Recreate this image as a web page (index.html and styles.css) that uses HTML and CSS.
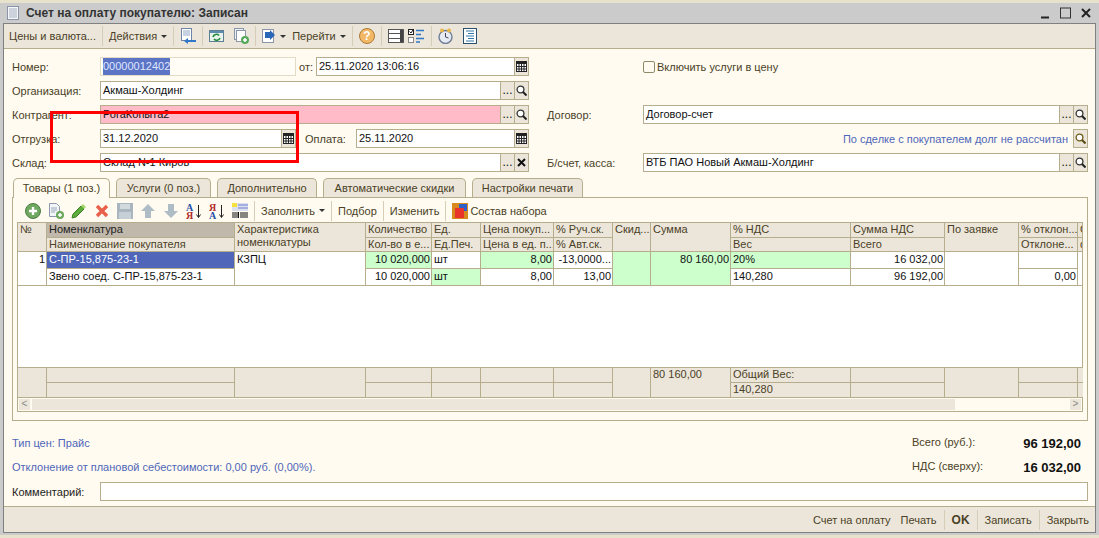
FILE: index.html
```html
<!DOCTYPE html>
<html lang="ru">

<head>
  <meta charset="UTF-8">
  <title>Счет на оплату покупателю: Записан</title>
  <link rel="stylesheet" href="styles.css">
</head>

<body>
  <svg class="sprite" width="0" height="0">
    <symbol id="i-cal" viewBox="0 0 11 11">
      <rect x="0.5" y="0.5" width="10" height="10" fill="#fff" stroke="#222" />
      <rect x="0" y="0" width="11" height="3" fill="#222" />
      <path d="M0 5.5h11M0 8h11M3 3v8M5.5 3v8M8 3v8" stroke="#222" />
    </symbol>
    <symbol id="i-find" viewBox="0 0 11 11">
      <circle cx="4.5" cy="4.5" r="3.4" fill="#fff" stroke="#333" stroke-width="1.3" />
      <path d="M7 7l3.5 3.5" stroke="#222" stroke-width="2" />
    </symbol>
    <symbol id="i-find-brown" viewBox="0 0 11 11">
      <circle cx="4.5" cy="4.5" r="3.4" fill="#fff" stroke="#6b5a14" stroke-width="1.3" />
      <path d="M7 7l3.5 3.5" stroke="#5b4a10" stroke-width="2" />
    </symbol>
  </svg>

  <div class="window">
    <div class="title">
      <svg class="title-icon" width="12" height="14" viewBox="0 0 12 14">
        <rect x="0.5" y="0.5" width="11" height="13" fill="#f6f7fa" stroke="#8a94a6" />
        <path d="M2 3h8M2 5h8M2 7h8M2 9h8M2 11h8" stroke="#a3adbd" />
      </svg>
      <span class="title-text">Счет на оплату покупателю: Записан</span>
      <div class="win-buttons">
        <svg width="9" height="12" viewBox="0 0 9 12"><path d="M0 10.5h8" stroke="#222" stroke-width="2" /></svg>
        <svg width="11" height="12" viewBox="0 0 11 12"><rect x="0.5" y="1" width="10" height="10" fill="none" stroke="#333" /></svg>
        <svg width="10" height="12" viewBox="0 0 10 12"><path d="M1 2l8 8M9 2l-8 8" stroke="#222" stroke-width="2" /></svg>
      </div>
    </div>

    <div class="inner">
      <div class="toolbar">
        <span>Цены и валюта...</span>
        <i class="sep"></i>
        <div class="group"><span>Действия</span><i class="arrow"></i></div>
        <i class="sep"></i>
        <svg width="16" height="16" viewBox="0 0 16 16">
          <rect x="1.5" y="0.5" width="10" height="12" fill="#fff" stroke="#6d83a8" />
          <path d="M3 3h7M3 5h7M3 7h7" stroke="#8ea3c4" />
          <path d="M16 12H8V10l-4 3 4 3v-2h8z" fill="#2f78c8" />
        </svg>
        <i class="sep"></i>
        <div class="group wide">
          <svg width="15" height="16" viewBox="0 0 15 16">
            <rect x="0.5" y="2.5" width="14" height="11" fill="#e8f3ec" stroke="#5c7f92" />
            <rect x="1" y="3" width="13" height="2" fill="#5c8db0" />
            <path d="M4 9a3.500 3.500 0 0 1 6-1.500M11 10a3.500 3.500 0 0 1-6 1" fill="none" stroke="#1f8a3a" stroke-width="1.600" />
          </svg>
          <svg width="15" height="16" viewBox="0 0 15 16">
            <rect x="0.5" y="0.5" width="9" height="11" fill="#eef1f5" stroke="#8996a8" />
            <rect x="2.500" y="2.500" width="9" height="11" fill="#fff" stroke="#8996a8" />
            <circle cx="11" cy="12" r="4" fill="#58a85c" />
            <path d="M9 12h4M11 10v4" stroke="#fff" stroke-width="1.500" />
          </svg>
        </div>
        <i class="sep"></i>
        <div class="group">
          <svg width="14" height="16" viewBox="0 0 14 16">
            <rect x="0.5" y="1.500" width="11" height="13" fill="#fff" stroke="#8996a8" />
            <path d="M3 4l5 0 0-2 5 5-5 5 0-2-5 0z" fill="#2a66b8" />
          </svg>
          <i class="arrow"></i>
        </div>
        <div class="group"><span>Перейти</span><i class="arrow"></i></div>
        <i class="sep"></i>
        <svg width="16" height="16" viewBox="0 0 16 16">
          <circle cx="8" cy="8" r="7.500" fill="#f3b866" stroke="#a87a3a" />
          <text x="8" y="12" class="help-mark">?</text>
        </svg>
        <i class="sep"></i>
        <div class="group">
          <svg width="16" height="16" viewBox="0 0 16 16">
            <rect x="0.500" y="1.500" width="15" height="13" fill="#fff" stroke="#555" />
            <path d="M0 5.500h16M0 10.500h16" stroke="#555" />
            <rect x="12" y="2" width="3" height="12" fill="#444" />
          </svg>
          <svg width="17" height="16" viewBox="0 0 17 16">
            <rect x="0.500" y="1.500" width="5" height="5" fill="#fff" stroke="#222" />
            <rect x="0.500" y="9.500" width="5" height="5" fill="#fff" stroke="#888" />
            <path d="M1.500 3.500l1.500 1.500 2-3" fill="none" stroke="#111" />
            <path d="M8 2.500h8M8 6.500h5M8 10.500h8M8 14h4" stroke="#2f78c8" stroke-width="1.600" />
          </svg>
        </div>
        <i class="sep"></i>
        <div class="group wide">
          <svg width="15" height="16" viewBox="0 0 15 16">
            <circle cx="7.500" cy="9" r="6.500" fill="#e6eaf2" stroke="#6f7f98" stroke-width="1.400" />
            <path d="M7.500 5v4l3 1" fill="none" stroke="#445" />
            <circle cx="4" cy="2.500" r="2" fill="#e8b54a" />
            <circle cx="11" cy="2.500" r="2" fill="#e8b54a" />
          </svg>
          <svg width="14" height="16" viewBox="0 0 14 16">
            <rect x="0.500" y="0.500" width="13" height="15" fill="#fff" stroke="#2b4f6e" />
            <path d="M3 3h8M5 5.500h6M3 8h8M5 10.500h6M3 13h8" stroke="#2f78a8" />
          </svg>
        </div>
      </div>

      <div class="form">
        <div class="head">
          <div class="col">
            <div class="row">
              <label class="cap">Номер:</label>
              <div class="field w-num readonly"><span class="picked">00000012402</span></div>
              <label class="cap-short">от:</label>
              <div class="field grow">
                <span class="val">25.11.2020 13:06:16</span>
                <span class="btn"><svg width="11" height="11"><use href="#i-cal" /></svg></span>
              </div>
            </div>
            <div class="row">
              <label class="cap">Организация:</label>
              <div class="field grow">
                <span class="val">Акмаш-Холдинг</span>
                <span class="btn dots">...</span>
                <span class="btn"><svg width="11" height="11"><use href="#i-find" /></svg></span>
              </div>
            </div>
            <div class="row">
              <label class="cap">Контрагент:</label>
              <div class="field grow pink">
                <span class="val">РогаКопыта2</span>
                <span class="btn dots">...</span>
                <span class="btn"><svg width="11" height="11"><use href="#i-find" /></svg></span>
              </div>
            </div>
            <div class="row">
              <label class="cap">Отгрузка:</label>
              <div class="field w-num">
                <span class="val">31.12.2020</span>
                <span class="btn"><svg width="11" height="11"><use href="#i-cal" /></svg></span>
              </div>
              <label class="cap-pay">Оплата:</label>
              <div class="field grow">
                <span class="val">25.11.2020</span>
                <span class="btn"><svg width="11" height="11"><use href="#i-cal" /></svg></span>
              </div>
            </div>
            <div class="row">
              <label class="cap">Склад:</label>
              <div class="field grow">
                <span class="val">Склад N-1 Киров</span>
                <span class="btn dots">...</span>
                <span class="btn"><svg width="9" height="9" viewBox="0 0 9 9"><path d="M1 1l7 7M8 1l-7 7" stroke="#111" stroke-width="2" /></svg></span>
              </div>
            </div>
          </div>

          <div class="col">
            <div class="row">
              <span class="check-space"></span>
              <span class="check"></span>
              <label class="check-label">Включить услуги в цену</label>
            </div>
            <div class="row"></div>
            <div class="row">
              <label class="cap-right">Договор:</label>
              <div class="field grow">
                <span class="val">Договор-счет</span>
                <span class="btn dots">...</span>
                <span class="btn"><svg width="11" height="11"><use href="#i-find" /></svg></span>
              </div>
            </div>
            <div class="row row-end">
              <a class="link">По сделке с покупателем долг не рассчитан</a>
              <span class="btn-solo"><svg width="11" height="11"><use href="#i-find-brown" /></svg></span>
            </div>
            <div class="row">
              <label class="cap-right">Б/счет, касса:</label>
              <div class="field grow">
                <span class="val">ВТБ ПАО Новый Акмаш-Холдинг</span>
                <span class="btn dots">...</span>
                <span class="btn"><svg width="11" height="11"><use href="#i-find" /></svg></span>
              </div>
            </div>
          </div>
        </div>

        <div class="tabs">
          <div class="tab active">Товары (1 поз.)</div>
          <div class="tab t-2">Услуги (0 поз.)</div>
          <div class="tab t-3">Дополнительно</div>
          <div class="tab t-4">Автоматические скидки</div>
          <div class="tab t-5">Настройки печати</div>
        </div>

        <div class="panel">
          <div class="tools">
            <div class="icons">
              <svg width="16" height="16" viewBox="0 0 16 16">
                <circle cx="8" cy="8" r="7.500" fill="#6fa860" stroke="#4b7d42" />
                <path d="M4 8h8M8 4v8" stroke="#fff" stroke-width="2.400" />
              </svg>
              <svg width="16" height="16" viewBox="0 0 16 16">
                <path d="M1.500 0.500h7l3 3v10h-10z" fill="#f3f5f8" stroke="#8a99ad" />
                <path d="M3 5h6M3 7h6M3 9h4" stroke="#9aa8bb" />
                <circle cx="12" cy="12" r="4" fill="#6aa85c" />
                <path d="M10 12h4M12 10v4" stroke="#fff" stroke-width="1.500" />
              </svg>
              <svg width="16" height="16" viewBox="0 0 16 16">
                <path d="M2 11l8-8 3 3-8 8-4 1z" fill="#5cac3c" stroke="#3c7f28" />
                <path d="M10 3l2-2 3 3-2 2z" fill="#a6d86a" />
              </svg>
              <svg width="16" height="16" viewBox="0 0 16 16">
                <path d="M3 3l10 10M13 3L3 13" stroke="#e8604c" stroke-width="3.400" />
              </svg>
              <svg width="16" height="16" viewBox="0 0 16 16">
                <rect x="0" y="0" width="16" height="16" fill="#a9b6bf" />
                <rect x="3" y="1" width="10" height="5" fill="#d3dade" />
                <rect x="2" y="9" width="12" height="7" fill="#c5cfd5" />
              </svg>
              <svg width="16" height="16" viewBox="0 0 16 16">
                <path d="M8 1l7 7h-4v7H5V8H1z" fill="#aebcc6" />
              </svg>
              <svg width="16" height="16" viewBox="0 0 16 16">
                <path d="M8 15l7-7h-4V1H5v7H1z" fill="#aebcc6" />
              </svg>
              <svg width="16" height="16" viewBox="0 0 16 16">
                <text x="0" y="7.500" class="sort blue">А</text>
                <text x="0" y="15.500" class="sort red">Я</text>
                <path d="M12.500 2v12M10.500 11.500l2 3 2-3" fill="none" stroke="#222" />
              </svg>
              <svg width="16" height="16" viewBox="0 0 16 16">
                <text x="0" y="7.500" class="sort red">Я</text>
                <text x="0" y="15.500" class="sort blue">А</text>
                <path d="M12.500 2v12M10.500 11.500l2 3 2-3" fill="none" stroke="#222" />
              </svg>
              <svg width="16" height="16" viewBox="0 0 16 16">
                <rect x="0" y="0" width="16" height="8" fill="#dbe0ef" />
                <rect x="0" y="0" width="5" height="4" fill="#f5e33c" />
                <path d="M6 2h10M6 5h10" stroke="#6d7fd0" />
                <path d="M1 9v6M3 9v6M5 9v6M6.500 9v6M9 9v6M11 9v6M13 9v6M15 9v6" stroke="#111" />
              </svg>
            </div>
            <i class="sep"></i>
            <div class="group"><span>Заполнить</span><i class="arrow"></i></div>
            <i class="sep"></i>
            <span>Подбор</span>
            <i class="sep"></i>
            <span>Изменить</span>
            <i class="sep"></i>
            <div class="group tight">
              <svg width="16" height="16" viewBox="0 0 16 16">
                <rect x="0" y="0" width="16" height="16" fill="#d98a1e" />
                <rect x="7" y="1" width="8" height="7" fill="#2f62c8" />
                <rect x="3" y="5" width="9" height="10" fill="#e8342a" />
              </svg>
              <span>Состав набора</span>
            </div>
          </div>

          <div class="grid">
            <table class="lines">
              <colgroup>
                <col class="c-num">
                <col class="c-name">
                <col class="c-char">
                <col class="c-qty">
                <col class="c-unit">
                <col class="c-price">
                <col class="c-disc">
                <col class="c-sk">
                <col class="c-sum">
                <col class="c-vat">
                <col class="c-vsum">
                <col class="c-req">
                <col class="c-dev">
                <col class="c-end">
              </colgroup>
              <tr class="r-15">
                <th rowspan="2">№</th>
                <th class="dark">Номенклатура</th>
                <th rowspan="2" class="wrap">Характеристика номенклатуры</th>
                <th>Количество</th>
                <th>Ед.</th>
                <th>Цена покуп...</th>
                <th>% Руч.ск.</th>
                <th rowspan="2">Скид...</th>
                <th rowspan="2">Сумма</th>
                <th>% НДС</th>
                <th>Сумма НДС</th>
                <th rowspan="2">По заявке</th>
                <th>% отклон...</th>
                <th>С</th>
              </tr>
              <tr class="r-14">
                <th>Наименование покупателя</th>
                <th>Кол-во в е...</th>
                <th>Ед.Печ.</th>
                <th>Цена в ед. п...</th>
                <th>% Авт.ск.</th>
                <th>Вес</th>
                <th>Всего</th>
                <th>Отклоне...</th>
                <th>ф</th>
              </tr>
              <tr class="r-17">
                <td rowspan="2" class="num">1</td>
                <td class="selected">С-ПР-15,875-23-1</td>
                <td rowspan="2">КЗПЦ</td>
                <td class="num green">10 020,000</td>
                <td>шт</td>
                <td class="num green">8,00</td>
                <td class="num">-13,0000...</td>
                <td rowspan="2" class="green"></td>
                <td rowspan="2" class="num green">80 160,00</td>
                <td class="green">20%</td>
                <td class="num">16 032,00</td>
                <td rowspan="2"></td>
                <td></td>
                <td rowspan="2" class="no-right"></td>
              </tr>
              <tr class="r-17">
                <td>Звено соед. С-ПР-15,875-23-1</td>
                <td class="num">10 020,000</td>
                <td class="green">шт</td>
                <td class="num">8,00</td>
                <td class="num">13,00</td>
                <td>140,280</td>
                <td class="num">96 192,00</td>
                <td class="num">0,00</td>
              </tr>
              <tr class="r-82">
                <td colspan="14" class="no-right"></td>
              </tr>
              <tr class="r-15 foot">
                <td rowspan="2"></td>
                <td></td>
                <td rowspan="2"></td>
                <td></td>
                <td></td>
                <td></td>
                <td></td>
                <td rowspan="2"></td>
                <td rowspan="2">80 160,00</td>
                <td>Общий Вес:</td>
                <td></td>
                <td rowspan="2"></td>
                <td></td>
                <td class="no-right"></td>
              </tr>
              <tr class="r-15 foot">
                <td></td>
                <td></td>
                <td></td>
                <td></td>
                <td></td>
                <td>140,280</td>
                <td></td>
                <td></td>
                <td class="no-right"></td>
              </tr>
            </table>
            <div class="scroll">
              <span class="scroll-btn">&lt;</span>
              <div class="track"><div class="thumb"></div></div>
              <span class="scroll-btn">&gt;</span>
            </div>
          </div>
        </div>

        <div class="info">
          <a class="link">Тип цен: Прайс</a>
          <div class="total"><span>Всего (руб.):</span><b>96 192,00</b></div>
        </div>
        <div class="info">
          <a class="link">Отклонение от плановой себестоимости: 0,00 руб. (0,00%).</a>
          <div class="total"><span>НДС (сверху):</span><b>16 032,00</b></div>
        </div>
        <div class="row comment">
          <label class="cap dark-cap">Комментарий:</label>
          <div class="field grow"></div>
        </div>
      </div>

      <div class="footer">
        <span class="print-first">Счет на оплату</span>
        <span>Печать</span>
        <i class="sep"></i>
        <b>OK</b>
        <i class="sep"></i>
        <span>Записать</span>
        <i class="sep"></i>
        <span>Закрыть</span>
      </div>
    </div>
  </div>

  <div class="red-box"></div>
</body>

</html>
```

FILE: styles.css
```css
* {
  box-sizing: border-box;
}

html,
body {
  margin: 0;
  height: 538px;
  overflow: hidden;
}

body {
  position: relative;
  padding-top: 3px;
  background: #e6e2cc;
  font-family: "Liberation Sans", Arial, sans-serif;
  font-size: 11px;
  color: #4a4126;
}

.sprite {
  position: absolute;
}

.window {
  height: 532px;
  border: solid #cbcbcb;
  border-width: 0 3px 2px;
  display: flex;
  flex-direction: column;
}

/* title bar */
.title {
  height: 20px;
  flex: none;
  display: flex;
  align-items: center;
  padding-left: 4px;
  background: #cbcbcb;
}

.title-icon {
  margin-right: 7px;
}

.title-text {
  font-size: 12px;
  font-weight: bold;
  color: #333;
}

.win-buttons {
  margin-left: auto;
  margin-right: 5px;
  display: flex;
  gap: 10px;
  align-items: center;
}

.inner {
  flex: 1;
  min-height: 0;
  display: flex;
  flex-direction: column;
  border: 1px solid #808080;
}

/* toolbars */
.toolbar {
  height: 25px;
  flex: none;
  display: flex;
  align-items: center;
  gap: 6px;
  padding-left: 5px;
  background: #ece6da;
  border-bottom: 1px solid #b5ad8b;
}

.sep {
  width: 1px;
  height: 20px;
  flex: none;
  background: #d5cdb6;
}

.group {
  display: flex;
  align-items: center;
  gap: 4px;
}

.group.wide {
  gap: 10px;
}

.group.tight {
  gap: 2px;
}

.arrow {
  width: 0;
  height: 0;
  border-top: 3px solid #333;
  border-left: 3px solid transparent;
  border-right: 3px solid transparent;
}

.help-mark {
  font: bold 12px "Liberation Sans", sans-serif;
  text-anchor: middle;
  fill: #fff;
}

.sort {
  font: bold 10px "Liberation Serif", serif;
}

.blue {
  fill: #1f4fa8;
}

.red {
  fill: #b02a2a;
}

/* form */
.form {
  flex: 1;
  min-height: 0;
  padding: 8px 7px 0 8px;
  background: #fffbf0;
  border-bottom: 1px solid #b5ad8b;
}

.head {
  display: grid;
  grid-template-columns: 517px 541px;
  column-gap: 18px;
}

.col {
  display: flex;
  flex-direction: column;
  gap: 5px;
}

.row {
  height: 19px;
  display: flex;
  align-items: center;
}

.row-end {
  justify-content: flex-end;
}

.cap {
  width: 88px;
  flex: none;
}

.cap-right {
  width: 96px;
  flex: none;
}

.cap-short {
  width: 20px;
  flex: none;
  padding-left: 3px;
}

.cap-pay {
  width: 60px;
  flex: none;
  padding-left: 9px;
}

.dark-cap {
  color: #222;
}

.field {
  height: 19px;
  display: flex;
  align-items: stretch;
  background: #fff;
  border: 1px solid #b5ad8b;
  color: #111;
}

.w-num {
  width: 196px;
  flex: none;
}

.readonly {
  background: #fffdf6;
  border-color: #e2dcc6;
}

.grow {
  flex: 1;
  min-width: 0;
}

.pink {
  background: #ffbbc8;
}

.val {
  flex: 1;
  padding-left: 2px;
  line-height: 17px;
  white-space: nowrap;
  overflow: hidden;
}

.picked {
  margin-left: 2px;
  background: #5b74c6;
  color: #dfe6ff;
  line-height: 17px;
}

.btn {
  width: 14px;
  flex: none;
  display: flex;
  align-items: center;
  justify-content: center;
  background: #ece6da;
  border-left: 1px solid #b5ad8b;
}

.dots {
  font-size: 12px;
  color: #111;
  padding-bottom: 2px;
  align-items: flex-end;
}

.btn-solo {
  width: 15px;
  height: 19px;
  margin-left: 5px;
  display: flex;
  align-items: center;
  justify-content: center;
  background: #ece6da;
  border: 1px solid #b5ad8b;
}

.check-space {
  width: 96px;
  flex: none;
}

.check {
  width: 12px;
  height: 12px;
  margin-right: 2px;
  background: #fffbf0;
  border: 1px solid #8f8a68;
  border-radius: 2px;
}

.link {
  color: #4f66b9;
}

/* tabs */
.tabs {
  display: flex;
  gap: 6px;
  margin: 6px 0 -1px 1px;
  position: relative;
}

.tab {
  height: 19px;
  padding-top: 3px;
  text-align: center;
  background: #ece6da;
  border: 1px solid #b5ad8b;
  border-bottom: none;
  border-radius: 5px 5px 0 0;
  width: 95px;
}

.tab.active {
  width: 97px;
  height: 20px;
  background: #fffbf0;
}

.t-3 {
  width: 100px;
}

.t-4 {
  width: 143px;
}

.t-5 {
  width: 111px;
}

.panel {
  height: 224px;
  padding: 1px 4px 7px;
  border: 1px solid #b5ad8b;
}

.tools {
  height: 23px;
  display: flex;
  align-items: center;
  gap: 6px;
  padding-left: 8px;
}

.icons {
  display: flex;
  gap: 7px;
}

/* tabular section */
.grid {
  height: 190px;
  border: 1px solid #b5ad8b;
  background: #fff;
  width: 1066px;
}

.lines {
  width: 1065px;
  table-layout: fixed;
  border-collapse: separate;
  border-spacing: 0;
}

.c-num { width: 29px; }
.c-name { width: 188px; }
.c-char { width: 131px; }
.c-qty { width: 66px; }
.c-unit { width: 49px; }
.c-price { width: 73px; }
.c-disc { width: 59px; }
.c-sk { width: 38px; }
.c-sum { width: 80px; }
.c-vat { width: 120px; }
.c-vsum { width: 94px; }
.c-req { width: 74px; }
.c-dev { width: 59px; }
.c-end { width: 5px; }

.lines th,
.lines td {
  padding: 0 1px 0 2px;
  border-right: 1px solid #b5ad8b;
  border-bottom: 1px solid #b5ad8b;
  font-weight: normal;
  font-size: 11px;
  line-height: 13px;
  text-align: left;
  vertical-align: top;
  white-space: nowrap;
  overflow: hidden;
}

.lines th {
  background: #ece6da;
  color: #4a4126;
}

.lines td {
  color: #111;
}

.lines th.wrap {
  white-space: normal;
}

.lines th.dark {
  background: #c0b8aa;
  color: #222;
}

.r-15 > * { height: 15px; }
.r-14 > * { height: 14px; }
.r-17 > * { height: 17px; padding-top: 1px !important; }
.r-82 > * { height: 82px; }

.lines td.num {
  text-align: right;
}

.lines td.green {
  background: #ccffcc;
}

.lines td.selected {
  background: #4f66b9;
  color: #fff;
}

.lines td.no-right {
  border-right: none;
}

.lines .foot td {
  background: #ece6da;
  color: #4a4126;
}

.scroll {
  height: 13px;
  display: flex;
  background: #fffbf0;
}

.scroll-btn {
  width: 13px;
  flex: none;
  background: #ece6da;
  border: 1px solid #fffbf0;
  font-size: 10px;
  line-height: 10px;
  text-align: center;
  color: #888;
}

.track {
  flex: 1;
}

.thumb {
  width: 925px;
  height: 100%;
  background: #ece6da;
  border: 1px solid #fffbf0;
}

/* totals */
.info {
  height: 18px;
  margin-top: 6px;
  display: flex;
  align-items: center;
  justify-content: space-between;
}

.panel + .info {
  margin-top: 13px;
}

.total {
  width: 169px;
  margin-right: 7px;
  display: flex;
  justify-content: space-between;
}

.total b {
  color: #111;
  font-size: 13px;
}

.comment {
  margin-top: 6px;
}

/* bottom bar */
.footer {
  height: 25px;
  flex: none;
  display: flex;
  align-items: center;
  justify-content: flex-end;
  gap: 7px;
  padding-right: 6px;
  background: #ece6da;
}

.footer b {
  font-size: 12px;
}

.print-first {
  margin-right: 3px;
}

/* annotation drawn over the screenshot */
.red-box {
  position: absolute;
  left: 50px;
  top: 111px;
  width: 249px;
  height: 52px;
  border: 3px solid #f00;
}
```
